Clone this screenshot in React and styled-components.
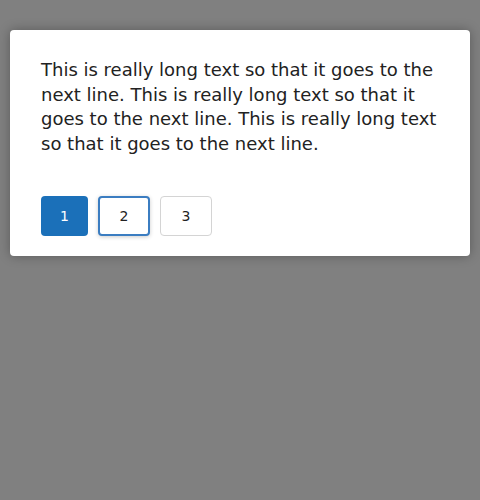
import React from "react";
import styled, { createGlobalStyle } from "styled-components";

const Global = createGlobalStyle`
  html, body { margin: 0; padding: 0; }
  body {
    background: #808080;
    font-family: "DejaVu Sans", "Liberation Sans", sans-serif;
    width: 480px;
    height: 500px;
    overflow: hidden;
  }
`;

const Overlay = styled.div`
  display: flex;
  justify-content: center;
  padding-top: 30px;
`;

const Dialog = styled.div`
  box-sizing: border-box;
  width: 460px;
  background: #ffffff;
  border-radius: 4px;
  box-shadow: 0 0 12px rgba(0, 0, 0, 0.3);
  padding: 28px 31px 20px;
  display: flex;
  flex-direction: column;
  gap: 39px;
`;

const Text = styled.p`
  margin: 0;
  font-size: 18px;
  line-height: 24.7px;
  color: #222222;
`;

const Row = styled.div`
  display: flex;
  gap: 10px;
`;

const PageButton = styled.button`
  box-sizing: border-box;
  height: 40px;
  width: ${(p) => (p.$primary ? "47px" : "52px")};
  padding: 0;
  border-radius: 4px;
  font-family: "DejaVu Sans", "Liberation Sans", sans-serif;
  font-size: 14px;
  display: flex;
  align-items: center;
  justify-content: center;
  cursor: pointer;
  background: ${(p) => (p.$primary ? "#1b70b9" : "#ffffff")};
  color: ${(p) => (p.$primary ? "#ffffff" : "#222222")};
  border: ${(p) =>
    p.$primary ? "none" : p.$focused ? "2px solid #3b7dc1" : "1px solid #d4d4d4"};
  box-shadow: ${(p) => (p.$focused ? "0 1px 4px rgba(0,0,0,0.2)" : "none")};
`;

export default function App() {
  return (
    <>
      <Global />
      <Overlay>
        <Dialog>
          <Text>
            This is really long text so that it goes to the next line. This is really long
            text so that it goes to the next line. This is really long text so that it goes
            to the next line.
          </Text>
          <Row>
            <PageButton $primary>1</PageButton>
            <PageButton $focused>2</PageButton>
            <PageButton>3</PageButton>
          </Row>
        </Dialog>
      </Overlay>
    </>
  );
}
